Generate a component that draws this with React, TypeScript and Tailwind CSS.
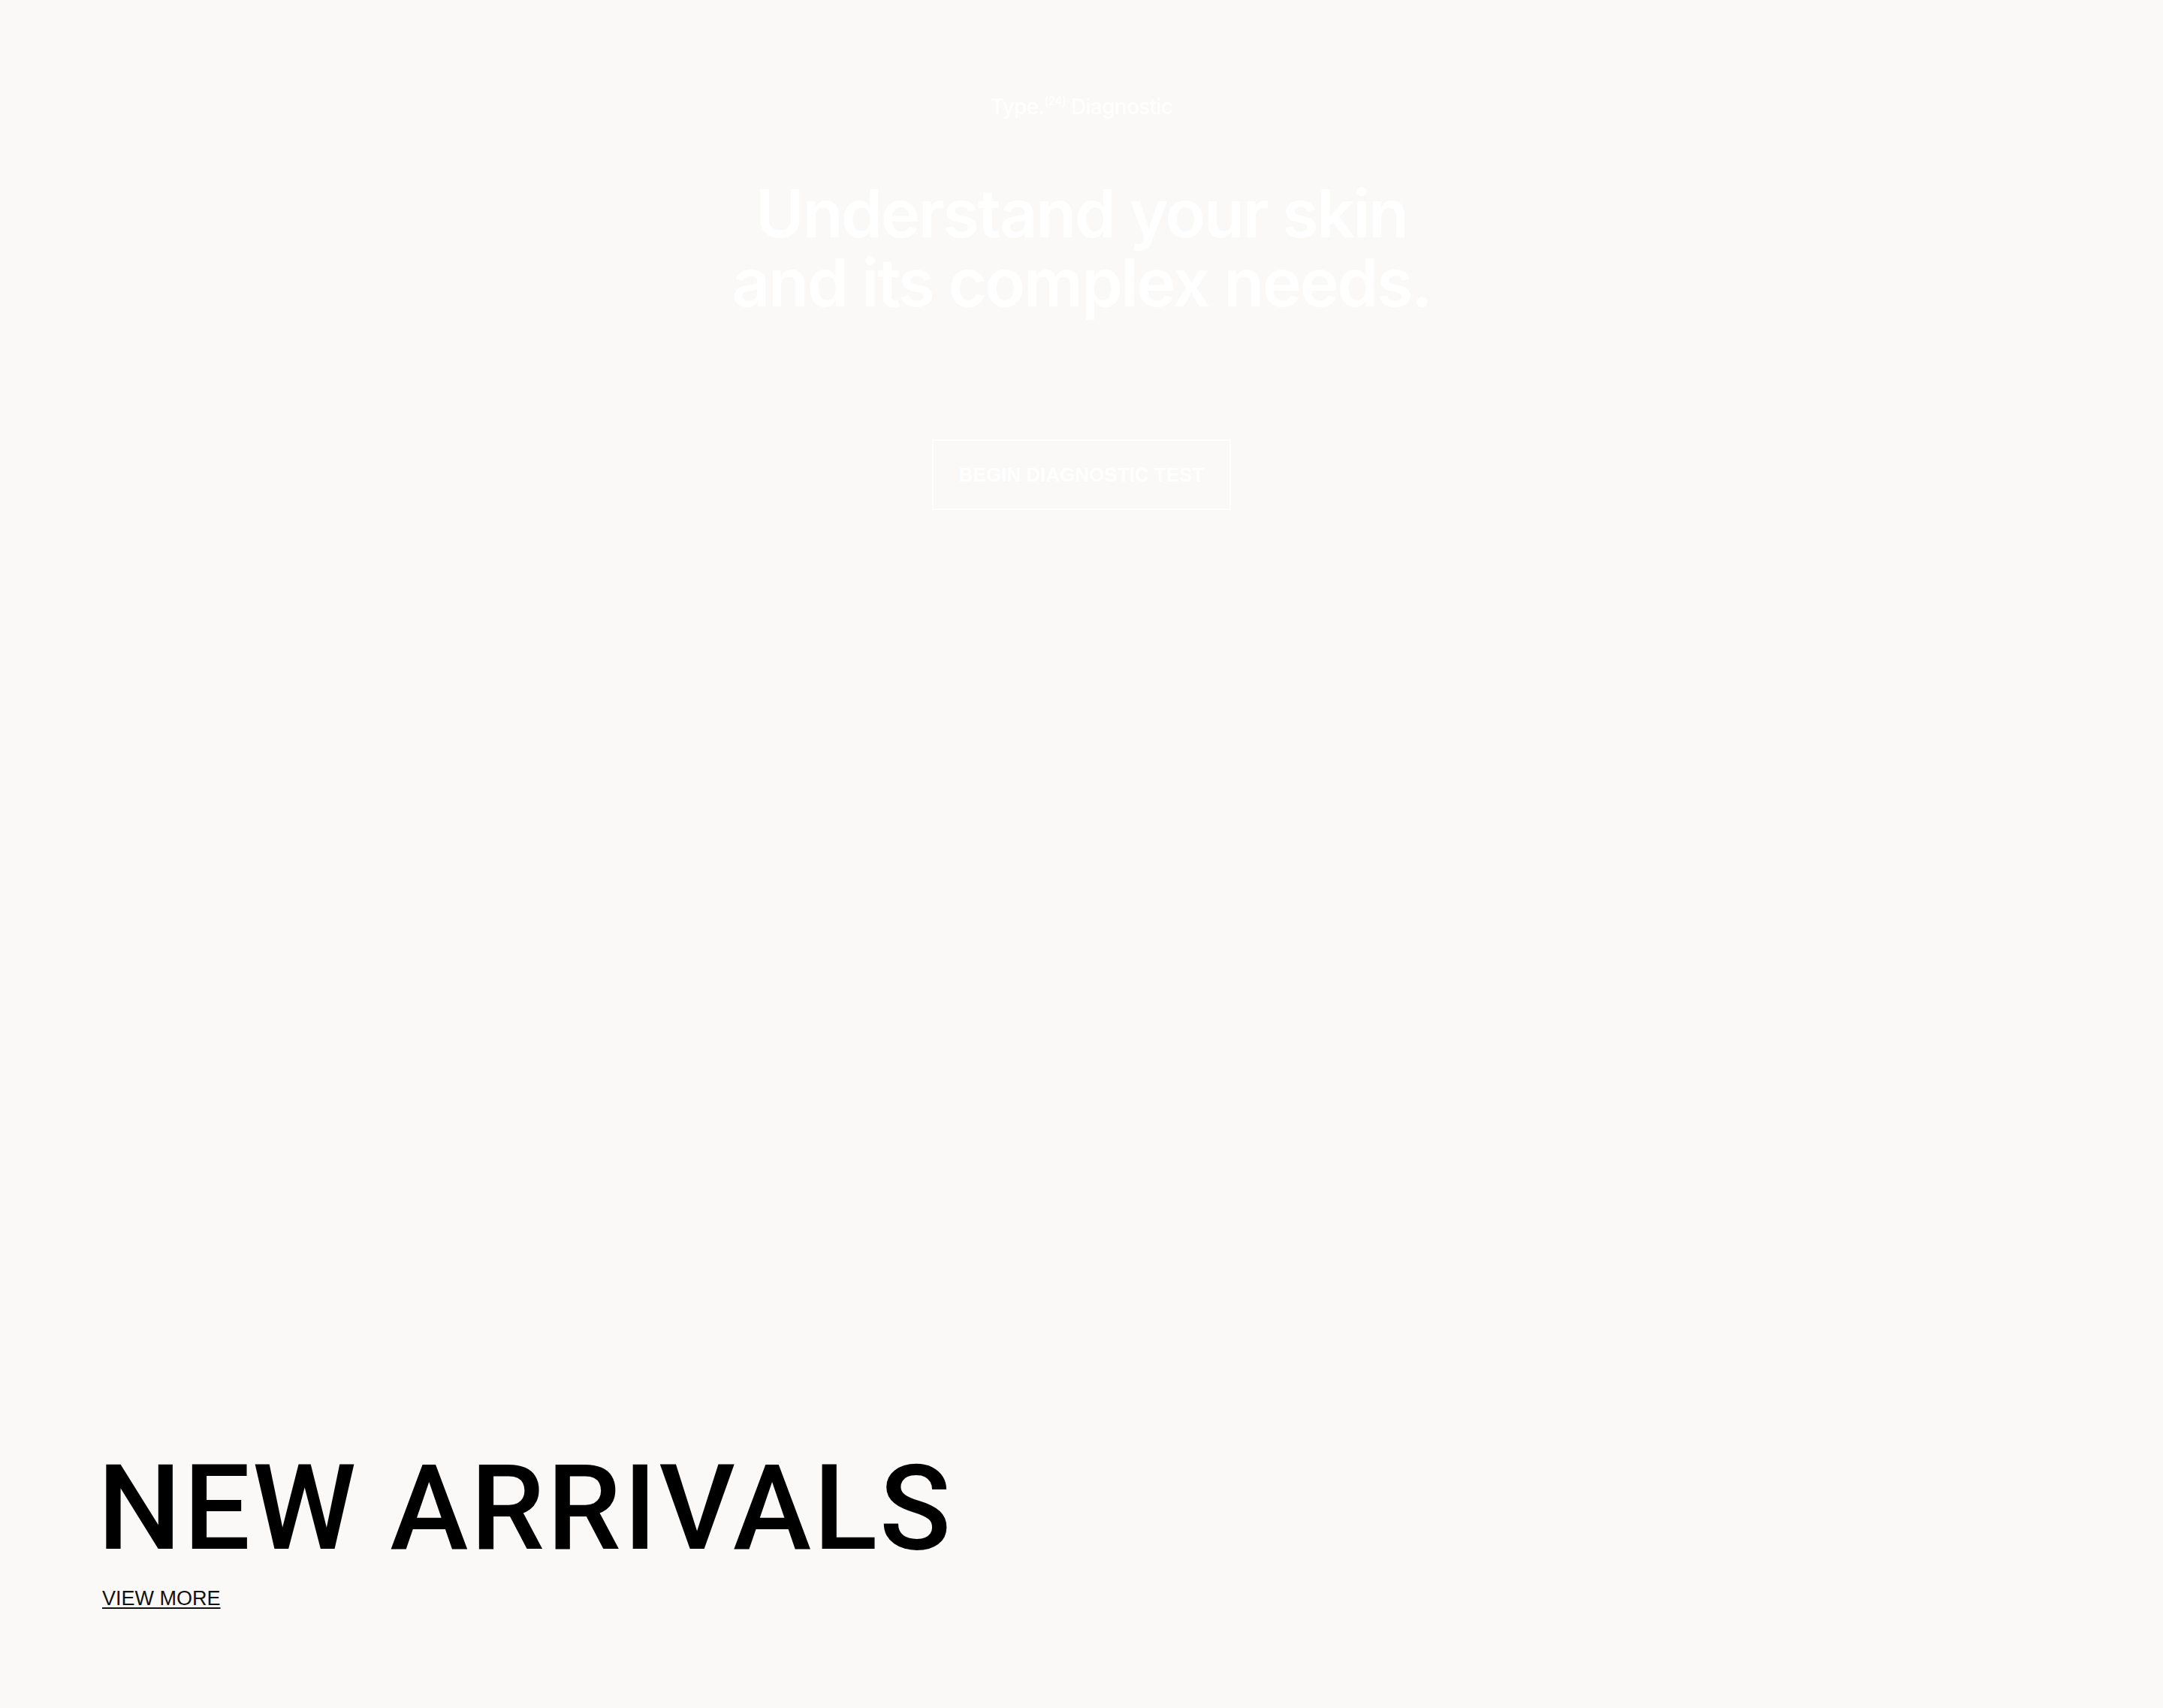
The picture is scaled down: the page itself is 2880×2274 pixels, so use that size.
import React from 'react';

export default function App() {
    return (
        <div className="min-h-screen bg-[#faf9f7]">
            {/* Hero - diagnostic */}
            <section className="h-[1840px] flex flex-col items-center pt-[125px] text-white">
                <p className="font-['Inter',sans-serif] font-medium text-[28px] leading-[34px] tracking-[-0.025em]">
                    Type.<sup className="text-[16px] -top-[12px]">(24)</sup> Diagnostic
                </p>

                <h1 className="mt-[79px] text-center font-['Inter',sans-serif] font-semibold text-[88px] leading-[92px] tracking-[-0.025em]">
                    Understand your skin
                    <br />
                    and its complex needs.
                </h1>

                <button
                    type="button"
                    className="mt-[163px] border-2 border-white px-[34px] py-[30px] font-['Liberation_Sans',Arial,sans-serif] font-bold text-[26px] leading-[30px] uppercase"
                >
                    Begin Diagnostic Test
                </button>
            </section>

            {/* New arrivals */}
            <section className="px-[136px] pt-[90px] pb-[130px]">
                <h2 className="-ml-[6px] font-['Roboto',sans-serif] font-medium text-[157px] leading-[157px] tracking-[3px] text-black">
                    NEW ARRIVALS
                </h2>
                <a
                    href="#"
                    className="mt-[25px] inline-block font-['Liberation_Sans',Arial,sans-serif] text-[27px] leading-[32px] text-[#111] underline decoration-2 underline-offset-[3px]"
                >
                    VIEW MORE
                </a>
            </section>
        </div>
    );
}
